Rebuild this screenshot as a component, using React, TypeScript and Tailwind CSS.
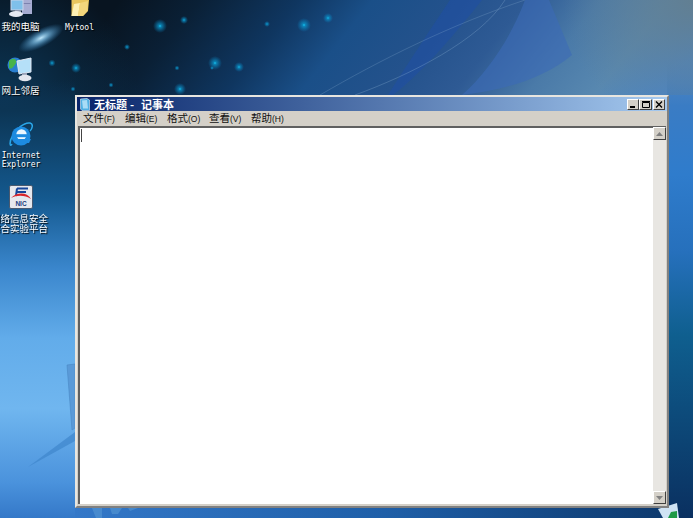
import type { ReactNode } from "react";

const cjk = "font-['Noto_Sans_CJK_SC','DejaVu_Sans',sans-serif]";

const stars: [number, number, number][] = [
  [160, 26, 7], [184, 20, 4], [127, 47, 3], [52, 63, 3.5], [76, 68, 5], [73, 89, 2.5], [111, 85, 2.5],
  [177, 68, 2.5], [180, 89, 6], [215, 63, 7], [212, 68, 2], [239, 67, 5], [267, 24, 3], [304, 25, 7], [328, 18, 5],
];

function Wallpaper() {
  return (
    <svg className="absolute inset-0" width="693" height="518" viewBox="0 0 693 518">
      <defs>
        <linearGradient id="base" x1="120" y1="0" x2="500" y2="300" gradientUnits="userSpaceOnUse">
          <stop offset="0" stopColor="#081420" />
          <stop offset="0.13" stopColor="#0a2036" />
          <stop offset="0.29" stopColor="#0f3660" />
          <stop offset="0.41" stopColor="#1a4f88" />
          <stop offset="0.55" stopColor="#24528c" />
          <stop offset="0.66" stopColor="#2e5a94" />
          <stop offset="0.78" stopColor="#4a7aa8" />
          <stop offset="0.89" stopColor="#5888b0" />
          <stop offset="1" stopColor="#4a86c8" />
        </linearGradient>
        <radialGradient id="leftGlow" cx="0" cy="110" r="140" gradientUnits="userSpaceOnUse">
          <stop offset="0" stopColor="#0c3a5c" />
          <stop offset="1" stopColor="#0c3a5c" stopOpacity="0" />
        </radialGradient>
        <linearGradient id="left" x1="0" y1="80" x2="0" y2="518" gradientUnits="userSpaceOnUse">
          <stop offset="0" stopColor="#0c3050" stopOpacity="0" />
          <stop offset="0.07" stopColor="#0c3554" />
          <stop offset="0.27" stopColor="#14598f" />
          <stop offset="0.43" stopColor="#3a86cc" />
          <stop offset="0.59" stopColor="#62acea" />
          <stop offset="0.75" stopColor="#70b6ef" />
          <stop offset="0.92" stopColor="#4a92dc" />
          <stop offset="1" stopColor="#3478c8" />
        </linearGradient>
        <linearGradient id="right" x1="0" y1="60" x2="0" y2="518" gradientUnits="userSpaceOnUse">
          <stop offset="0" stopColor="#4a80b8" stopOpacity="0" />
          <stop offset="0.1" stopColor="#3a7cc4" />
          <stop offset="0.25" stopColor="#2f7ccc" />
          <stop offset="0.42" stopColor="#2670bc" />
          <stop offset="0.6" stopColor="#0f5f8f" />
          <stop offset="1" stopColor="#0a3060" />
        </linearGradient>
        <linearGradient id="bottom" x1="75" y1="0" x2="693" y2="0" gradientUnits="userSpaceOnUse">
          <stop offset="0" stopColor="#3478c8" />
          <stop offset="0.5" stopColor="#1f5fa8" />
          <stop offset="1" stopColor="#0c3668" />
        </linearGradient>
        <radialGradient id="corner" cx="693" cy="0" r="130" gradientUnits="userSpaceOnUse">
          <stop offset="0" stopColor="#627f92" />
          <stop offset="1" stopColor="#627f92" stopOpacity="0" />
        </radialGradient>
        <radialGradient id="star">
          <stop offset="0" stopColor="#18c8f4" />
          <stop offset="0.22" stopColor="#0a9ad0" stopOpacity="0.75" />
          <stop offset="1" stopColor="#0a80c0" stopOpacity="0" />
        </radialGradient>
        <radialGradient id="flare">
          <stop offset="0" stopColor="#bfe8fc" />
          <stop offset="0.35" stopColor="#7cc0ea" stopOpacity="0.7" />
          <stop offset="1" stopColor="#3a8cc8" stopOpacity="0" />
        </radialGradient>
      </defs>
      <rect width="693" height="518" fill="url(#base)" />
      <rect width="200" height="260" fill="url(#leftGlow)" />
      <rect y="80" width="75" height="438" fill="url(#left)" />
      <rect x="75" y="505" width="618" height="13" fill="url(#bottom)" />
      <rect x="667" y="60" width="26" height="458" fill="url(#right)" />
      <rect width="693" height="95" fill="url(#corner)" />
      <path d="M450 0 L482 0 C458 30 425 70 393 95 L388 95 C410 60 430 30 450 0Z" fill="#1f4fa6" opacity="0.55" />
      <path d="M525 0 L549 0 L572 55 C545 78 505 90 462 95 C490 70 512 35 525 0Z" fill="#3c6ab8" opacity="0.6" />
      <path d="M320 95 C380 60 450 25 525 0" stroke="#8fb4d4" strokeOpacity="0.25" fill="none" />
      <path d="M355 95 C410 75 480 40 505 0" stroke="#8fb4d4" strokeOpacity="0.3" fill="none" />
      <ellipse cx="41" cy="38" rx="25" ry="9" transform="rotate(-28 41 38)" fill="url(#flare)" />
      {stars.map(([x, y, r], i) => (
        <circle key={i} cx={x} cy={y} r={r} fill="url(#star)" />
      ))}
      <path d="M67 365 L75 364 L75 428 L72 430Z" fill="#5a9ad8" stroke="#4a88c4" strokeOpacity="0.6" />
      <path d="M28 467 L75 432 L75 441Z" fill="#3f86cc" opacity="0.7" />
      <path d="M92 508 L102 508 L102 518 L96 518Z M110 508 L122 508 L118 514 L112 514Z M128 508 L138 508 L130 511Z" fill="#5a9ad6" opacity="0.55" />
      <path d="M658 509 L677 503 L679 518 L663 518Z" fill="#cfe3f4" />
      <path d="M668 518 L671 512 L677 511 L677 518Z" fill="#1f9a46" />
    </svg>
  );
}

function Label({ children, mono }: { children: ReactNode; mono?: boolean }) {
  return (
    <div
      className={
        mono
          ? "text-center whitespace-nowrap text-white font-['DejaVu_Sans_Mono',monospace] text-[8px] leading-[9px] [text-shadow:1px_1px_1px_#000]"
          : `text-center whitespace-nowrap text-white text-[9.5px] leading-[10px] [text-shadow:1px_1px_1px_#000] ${cjk}`
      }
    >
      {children}
    </div>
  );
}

function Computer() {
  return (
    <svg width="24" height="18" viewBox="0 0 24 18">
      <rect x="13" y="0" width="10" height="14" fill="#a7acd2" />
      <rect x="14.5" y="3" width="7" height="1" fill="#7c82ae" />
      <rect x="2" y="0" width="12" height="10" fill="#7fc0ea" stroke="#c9d3e8" />
      <rect x="6" y="10" width="6" height="3" fill="#8f97ae" />
      <ellipse cx="7" cy="14" rx="7" ry="3" fill="#e6e9f2" />
    </svg>
  );
}

function Folder() {
  return (
    <svg width="18" height="17" viewBox="0 0 18 17">
      <path d="M0.5 0 L0.5 16 L12 16 L17 11 L18 0 Z" fill="#e9c65e" />
      <path d="M0.5 16 L3 4 L9 3 L7 16Z" fill="#fdf0b4" />
      <path d="M7 16 L9 3 L17 1 L16.5 11 L12 16Z" fill="#f3d67c" />
    </svg>
  );
}

function Network() {
  return (
    <svg width="26" height="25" viewBox="0 0 26 25">
      <circle cx="8" cy="8" r="7.5" fill="#2a7fd0" />
      <path d="M2 4 C6 0 10 2 9 6 C7 9 5 13 2 11Z" fill="#48b34a" />
      <path d="M10 4 L24 1 L24 15 L12 17Z" fill="#b5e0f8" stroke="#dfe8f4" />
      <rect x="15" y="16" width="5" height="4" fill="#9aa3b8" />
      <ellipse cx="18" cy="21" rx="6.5" ry="3.2" fill="#e3e6ee" />
    </svg>
  );
}

function IE() {
  return (
    <svg width="24" height="26" viewBox="0 0 24 26">
      <path d="M3 22 C1 26 0 20 3 15 C7 7 15 0 21 1 C25 2 23 7 21 9" fill="none" stroke="#2aa6e8" strokeWidth="1.5" />
      <circle cx="12" cy="14" r="9.5" fill="#1d8be0" />
      <circle cx="12.5" cy="12.5" r="5.2" fill="#eaf7ff" />
      <rect x="6" y="12.2" width="13" height="3" fill="#1d8be0" />
      <path d="M10 17 L22 17 L20 21 L10 21Z" fill="#1d8be0" />
    </svg>
  );
}

function Nic() {
  return (
    <svg width="24" height="24" viewBox="0 0 24 24">
      <rect x="0.5" y="0.5" width="23" height="23" rx="1.5" fill="#e6e8ee" stroke="#4a5a70" />
      <path d="M8 3.5 L19 3.5 M8 3.5 L7 11 M8 7 L17 7" fill="none" stroke="#16459a" strokeWidth="2" />
      <path d="M2 13 C8 7 18 7 22 14 C16 10 8 10 2 13Z" fill="#d8232a" />
      <text x="12" y="21" textAnchor="middle" fontSize="6.5" fontWeight="700" fill="#1a3a7a" fontFamily="Liberation Sans">NIC</text>
    </svg>
  );
}

function NotepadIcon() {
  return (
    <svg width="10" height="13" viewBox="0 0 10 13" className="shrink-0">
      <path d="M0.5 1 L7 0.5 L9.5 2 L9.5 12.5 L2 12.5 L0.5 11Z" fill="#4fb0e4" stroke="#e0eef8" strokeWidth="0.6" />
      <path d="M2 2.5 L7 2 L8 10.5 L3 10.5Z" fill="#a8dcf6" />
    </svg>
  );
}

function CaptionButton({ kind, className = "" }: { kind: "min" | "max" | "close"; className?: string }) {
  return (
    <div
      className={`h-[11px] shrink-0 bg-[#d4d0c8] border border-t-white border-l-white border-r-[#404040] border-b-[#404040] flex items-center justify-center ${className}`}
    >
      <svg width="8" height="7" viewBox="0 0 8 7">
        {kind === "min" && <rect x="1" y="5" width="5" height="2" fill="#000" />}
        {kind === "max" && <path d="M0.5 1.5 H7.5 V6.5 H0.5Z M0 0.5 H8" stroke="#000" fill="none" strokeWidth="1" />}
        {kind === "close" && <path d="M1 0.5 L7 6.5 M7 0.5 L1 6.5" stroke="#000" strokeWidth="1.4" />}
      </svg>
    </div>
  );
}

function ScrollButton({ up }: { up?: boolean }) {
  return (
    <div className="w-[13px] h-[13px] shrink-0 bg-[#d4d0c8] border border-t-white border-l-white border-r-[#404040] border-b-[#404040] flex items-center justify-center">
      <svg width="7" height="4" viewBox="0 0 7 4">
        <path d={up ? "M3.5 0 L7 4 L0 4Z" : "M0 0 L7 0 L3.5 4Z"} fill="#808080" />
      </svg>
    </div>
  );
}

const menu: [string, string][] = [
  ["文件", "F"], ["编辑", "E"], ["格式", "O"], ["查看", "V"], ["帮助", "H"],
];

export default function App() {
  return (
    <div className="relative w-[693px] h-[518px] overflow-hidden bg-[#1f5f9c]">
      <div className="absolute inset-0 blur-[0.4px]">
        <Wallpaper />

        <div className="absolute left-[9px] top-0"><Computer /></div>
        <div className="absolute left-0 top-[21px] w-[41px]"><Label>我的电脑</Label></div>

        <div className="absolute left-[71px] top-0"><Folder /></div>
        <div className="absolute left-[60px] top-[23px] w-[39px]"><Label mono>Mytool</Label></div>

        <div className="absolute left-[7px] top-[57px]"><Network /></div>
        <div className="absolute left-0 top-[85px] w-[41px]"><Label>网上邻居</Label></div>

        <div className="absolute left-[9px] top-[122px]"><IE /></div>
        <div className="absolute left-0 top-[151px] w-[42px]"><Label mono>Internet<br />Explorer</Label></div>

        <div className="absolute left-[9px] top-[185px]"><Nic /></div>
        <div className="absolute left-[-9px] top-[213px] w-[57px]"><Label>网络信息安全<br />综合实验平台</Label></div>

        <div className="absolute left-[75px] top-[95px] w-[594px] h-[413px] bg-[#d4d0c8] border-2 border-t-[#e8e6e0] border-l-[#e8e6e0] border-r-[#808080] border-b-[#808080] flex flex-col">
          <div className="h-[14px] shrink-0 bg-gradient-to-r from-[#0a246a] to-[#a6caf0] flex items-center pl-[3px] pr-[2px]">
            <NotepadIcon />
            <div className={`ml-[4px] flex text-white text-[11px] leading-[13px] font-bold whitespace-nowrap ${cjk}`}>
              <span>无标题</span>
              <span className="ml-[3px]">-</span>
              <span className="ml-[7px]">记事本</span>
            </div>
            <div className="flex-1" />
            <CaptionButton kind="min" className="w-[12px]" />
            <CaptionButton kind="max" className="w-[13px]" />
            <CaptionButton kind="close" className="w-[12px] ml-[1px]" />
          </div>
          <div className={`h-[15px] shrink-0 flex items-center pl-[6px] text-[10.5px] text-[#111] ${cjk}`}>
            {menu.map(([t, k]) => (
              <div key={k} className="w-[42px] whitespace-nowrap leading-[15px]">
                {t}
                <span className="font-['Liberation_Sans',sans-serif] text-[8.5px]">({k})</span>
              </div>
            ))}
          </div>
          <div className="flex-1 min-h-0 ml-[1px] mr-[1px] mb-[2px] flex border-t-2 border-l-2 border-t-[#606060] border-l-[#606060] bg-white">
            <div className="flex-1 bg-white pl-[1px] pt-[1px]">
              <div className="w-[1px] h-[13px] bg-[#444]" />
            </div>
            <div className="w-[13px] flex flex-col bg-[#e8e6e2] -mt-[1px]">
              <ScrollButton up />
              <div className="flex-1" />
              <ScrollButton />
            </div>
          </div>
        </div>
      </div>
    </div>
  );
}
